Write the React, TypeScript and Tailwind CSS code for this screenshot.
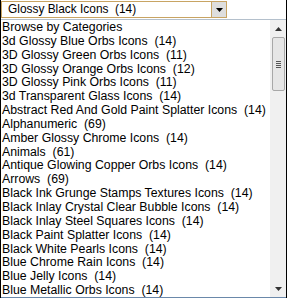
const ITEMS = [
  "Browse by Categories",
  "3d Glossy Blue Orbs Icons  (14)",
  "3D Glossy Green Orbs Icons  (11)",
  "3D Glossy Orange Orbs Icons  (12)",
  "3D Glossy Pink Orbs Icons  (11)",
  "3d Transparent Glass Icons  (14)",
  "Abstract Red And Gold Paint Splatter Icons  (14)",
  "Alphanumeric  (69)",
  "Amber Glossy Chrome Icons  (14)",
  "Animals  (61)",
  "Antique Glowing Copper Orbs Icons  (14)",
  "Arrows  (69)",
  "Black Ink Grunge Stamps Textures Icons  (14)",
  "Black Inlay Crystal Clear Bubble Icons  (14)",
  "Black Inlay Steel Squares Icons  (14)",
  "Black Paint Splatter Icons  (14)",
  "Black White Pearls Icons  (14)",
  "Blue Chrome Rain Icons  (14)",
  "Blue Jelly Icons  (14)",
  "Blue Metallic Orbs Icons  (14)",
];

const Arrow = ({ up }: { up?: boolean }) => (
  <svg width="7" height="4" viewBox="0 0 7 4">
    <path d={up ? "M0 4L3.5 0L7 4Z" : "M0 0L7 0L3.5 4Z"} fill="#333" />
  </svg>
);

export default function App() {
  return (
    <div className="relative h-[298px] w-[287px] overflow-hidden border-x border-black bg-white font-['Liberation_Sans',Arial,sans-serif] text-[12.3px] text-black">
      {/* Select */}
      <div className="mt-px flex h-[17px] w-[226px] items-center border border-[#c8a463] bg-white">
        <span className="flex-1 whitespace-pre pl-[6px] text-[11.9px]">Glossy Black Icons  (14)</span>
        <div className="-mt-px -mr-px -mb-px flex h-[17px] w-[16px] items-center justify-center self-start border border-[#c8a463] bg-[#dedede]">
          <svg width="7" height="4" viewBox="0 0 7 4">
            <path d="M0 0L7 0L3.5 4Z" fill="#000" />
          </svg>
        </div>
      </div>

      {/* Listbox */}
      <div className="mt-px flex h-[279px] border-t border-b border-t-[#b4c0cc] border-b-[#6a88aa]">
        <div className="flex-1 overflow-hidden pl-[1px] pt-px">
          {ITEMS.map((item) => (
            <div key={item} className="h-[13.85px] whitespace-pre leading-[13.85px]">
              {item}
            </div>
          ))}
        </div>
        <div className="flex w-[16px] flex-col items-center bg-[#f0f0f0]">
          <div className="flex h-[15px] items-center justify-center pt-[3px]">
            <Arrow up />
          </div>
          <div className="mt-[2px] flex h-[54px] w-[13px] flex-col items-center justify-center gap-[1px] rounded-[2px] border border-[#a8a8a8] bg-[#e6e6e6]">
            <div className="h-px w-[5px] bg-[#555]" />
            <div className="h-px w-[5px] bg-[#555]" />
            <div className="h-px w-[5px] bg-[#555]" />
            <div className="h-px w-[5px] bg-[#555]" />
          </div>
          <div className="flex-1" />
          <div className="flex h-[15px] items-center justify-center pb-[2px]">
            <Arrow />
          </div>
        </div>
      </div>
    </div>
  );
}
